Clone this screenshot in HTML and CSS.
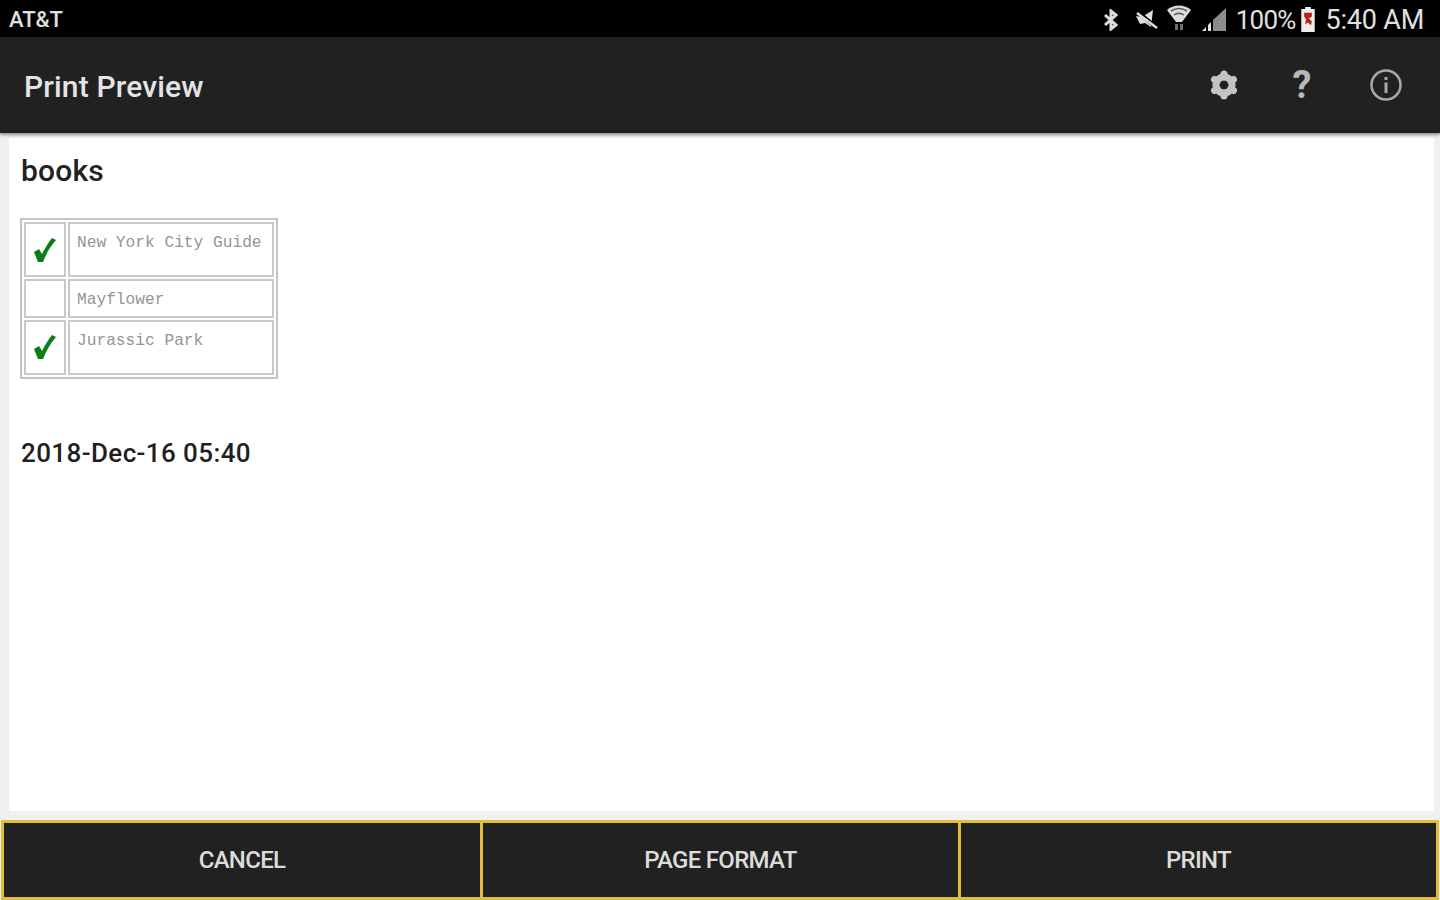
FILE: index.html
```html
<!DOCTYPE html>
<html lang="en">
<head>
  <meta charset="utf-8">
  <title>Print Preview</title>
  <link rel="stylesheet" href="styles.css">
</head>
<body>

  <div class="status-bar">
    <span class="carrier">AT&amp;T</span>
    <div class="status-right">
      <!-- bluetooth -->
      <svg class="st-icon st-bt" viewBox="0 0 15 22" fill="none" stroke="#dedede" stroke-width="3">
        <path d="M2 6l11 10-5 4V2l5 4L2 16"/>
      </svg>
      <!-- muted speaker -->
      <svg class="st-icon st-mute" viewBox="0 0 24 22">
        <path d="M1 7l6 1 11-7-2 17-6-4-5 1z" fill="#dedede"/>
        <path d="M3 3l19 16" stroke="#000" stroke-width="4"/>
        <path d="M2 4l20 15" stroke="#dedede" stroke-width="2.400"/>
      </svg>
      <!-- wifi -->
      <svg class="st-icon st-wifi" viewBox="0 0 26 28">
        <path d="M1 6c6-6 18-6 24 0l-9 12h-6z" fill="#dcdcdc"/>
        <path d="M5 7c5-3 11-3 16 0M8 11c3-2 7-2 10 0" fill="none" stroke="#555" stroke-width="1.500"/>
        <path d="M9 20h3v6H9zM14 20h3v6h-3z" fill="#6e6e6e"/>
      </svg>
      <!-- signal -->
      <svg class="st-icon st-signal" viewBox="0 0 26 25">
        <path d="M1 24l4-4v4z" fill="#e4e4e4"/>
        <path d="M7 24v-6l3-3v9z" fill="#e4e4e4"/>
        <path d="M12 24V13l13-12v23z" fill="#8c8c8c"/>
      </svg>
      <span class="battery-pct">100%</span>
      <!-- battery with red charging mark -->
      <svg class="st-icon st-batt" viewBox="0 0 16 26">
        <path d="M5 0h6v2h4v24H1V2h4z" fill="#eee"/>
        <path d="M4 6h8v4l-3 2 3 3-1 4-3-3-3 2 1-5-2-3z" fill="#b8201c"/>
      </svg>
      <span class="clock">5:40 AM</span>
    </div>
  </div>

  <header class="app-bar">
    <h1 class="app-title">Print Preview</h1>
    <div class="app-actions">
      <svg class="gear" viewBox="0 0 30 30">
        <circle cx="15" cy="15" r="8" fill="none" stroke="#c4c4c4" stroke-width="7"/>
        <g stroke="#c4c4c4" stroke-width="7" stroke-linecap="round">
          <path d="M15 4v3"/>
          <path d="M15 23v3"/>
          <path d="M5.500 9.500l2.600 1.500"/>
          <path d="M21.900 19l2.600 1.500"/>
          <path d="M5.500 20.500l2.600-1.500"/>
          <path d="M21.900 11l2.600-1.500"/>
        </g>
      </svg>
      <span class="help">?</span>
      <svg class="info" viewBox="0 0 34 34" fill="none" stroke="#a8a8a8">
        <circle cx="17" cy="17" r="14.500" stroke-width="2.500"/>
        <path d="M17 14.500V25" stroke-width="3"/>
        <path d="M17 9v3" stroke-width="3"/>
      </svg>
    </div>
  </header>

  <main class="content-wrap">
    <div class="sheet">
      <h2 class="doc-title">books</h2>

      <table class="check-table">
        <tr class="row-tall">
          <td class="cell-check">
            <svg class="tick" viewBox="0 0 22 24"><path d="M0 14l5-3 3 5C11 10 14 5 18 0l4 2C16 9 12 16 9 24H4z" fill="#0a7d14"/></svg>
          </td>
          <td class="cell-text">New York City Guide</td>
        </tr>
        <tr class="row-short">
          <td class="cell-check"></td>
          <td class="cell-text">Mayflower</td>
        </tr>
        <tr class="row-tall">
          <td class="cell-check">
            <svg class="tick" viewBox="0 0 22 24"><path d="M0 14l5-3 3 5C11 10 14 5 18 0l4 2C16 9 12 16 9 24H4z" fill="#0a7d14"/></svg>
          </td>
          <td class="cell-text">Jurassic Park</td>
        </tr>
      </table>

      <p class="doc-date">2018-Dec-16 05:40</p>
    </div>
  </main>

  <footer class="button-bar">
    <button class="bar-btn">CANCEL</button>
    <button class="bar-btn">PAGE FORMAT</button>
    <button class="bar-btn">PRINT</button>
  </footer>

</body>
</html>
```

FILE: styles.css
```css
body {
  margin: 0;
  height: 900px;
  display: flex;
  flex-direction: column;
  font-family: 'Roboto', sans-serif;
  background-color: #f0f0f0;
  overflow: hidden;
}

.status-bar {
  height: 37px;
  flex-shrink: 0;
  background-color: #000;
  color: #e0e0e0;
  display: flex;
  align-items: center;
  justify-content: space-between;
  padding: 2px 16px 0 9px;
  box-sizing: border-box;
}

.carrier {
  font-size: 22px;
  font-weight: 500;
  letter-spacing: -0.1px;
}

.status-right {
  display: flex;
  align-items: center;
}

.st-icon {
  display: block;
}

.st-bt {
  width: 15px;
  height: 22px;
  margin-right: 17px;
}

.st-mute {
  width: 24px;
  height: 22px;
  margin-right: 7px;
}

.st-wifi {
  width: 26px;
  height: 28px;
  margin-right: 9px;
  margin-top: -4px;
}

.st-signal {
  width: 26px;
  height: 25px;
  margin-right: 9px;
}

.battery-pct {
  font-size: 26px;
  letter-spacing: -0.8px;
}

.st-batt {
  width: 16px;
  height: 25px;
  margin: 0 9px 0 5px;
}

.clock {
  font-size: 27px;
  letter-spacing: -0.2px;
}

.app-bar {
  height: 96px;
  flex-shrink: 0;
  background-color: #212121;
  display: flex;
  align-items: center;
  justify-content: space-between;
  padding: 0 37px 0 24px;
  box-sizing: border-box;
  box-shadow: 0 2px 3px rgba(0, 0, 0, 0.4);
  position: relative;
}

.app-title {
  margin: 2px 0 0;
  font-size: 30px;
  font-weight: 500;
  color: #e4e4e4;
  letter-spacing: 0.15px;
}

.app-actions {
  display: flex;
  align-items: center;
}

.gear {
  width: 30px;
  height: 30px;
  margin-right: 51px;
}

.help {
  font-size: 38px;
  font-weight: 700;
  color: #b8b8b8;
  width: 24px;
  text-align: center;
  margin-right: 55px;
  line-height: 40px;
}

.info {
  width: 34px;
  height: 34px;
}

.content-wrap {
  flex: 1;
  padding: 5px 6px 9px 9px;
  min-height: 0;
  display: flex;
}

.sheet {
  flex: 1;
  background-color: #fff;
  padding: 14px 11px;
}

.doc-title {
  margin: 0 0 28px;
  padding-left: 1px;
  font-size: 30px;
  line-height: 38px;
  font-weight: 500;
  color: #222;
  letter-spacing: 0.2px;
}

.check-table {
  width: 258px;
  height: 161px;
  box-sizing: border-box;
  border: 2px solid #c4c4c4;
  border-spacing: 2px;
  table-layout: fixed;
}

.check-table td {
  border: 2px solid #c8c8c8;
  padding: 0;
}

.row-tall {
  height: 54px;
}

.row-short {
  height: 38px;
}

.cell-check {
  width: 38px;
  text-align: center;
  vertical-align: middle;
}

.tick {
  display: block;
  width: 22px;
  height: 24px;
  margin: 0 auto;
}

.check-table .cell-text {
  font-family: 'Liberation Mono', monospace;
  font-size: 16.2px;
  color: #949494;
  vertical-align: top;
  padding: 10px 0 0 7px;
}

.doc-date {
  margin: 58px 0 0;
  padding-left: 1px;
  font-size: 26px;
  font-weight: 500;
  line-height: 32px;
  color: #1f1f1f;
  letter-spacing: 0.4px;
}

.button-bar {
  height: 80px;
  flex-shrink: 0;
  display: grid;
  grid-template-columns: 479px 478px 1fr;
  padding: 0 1px;
}

.bar-btn {
  background-color: #212121;
  border: 3px solid #e2bd3a;
  border-right-width: 0;
  color: #dcdcdc;
  font-family: 'Roboto', sans-serif;
  font-size: 24px;
  font-weight: 500;
  letter-spacing: -0.7px;
  padding: 0;
}

.bar-btn:last-child {
  border-right-width: 3px;
}
```
